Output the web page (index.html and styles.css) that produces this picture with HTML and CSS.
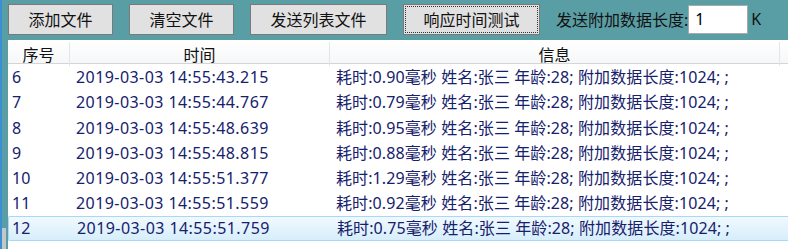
FILE: index.html
```html
<!DOCTYPE html>
<html lang="zh-CN">
<head>
    <meta charset="UTF-8">
    <title>响应时间测试</title>
    <link rel="stylesheet" href="styles.css">
</head>
<body>

<div class="toolbar">
    <button class="btn btn-sm">添加文件</button>
    <button class="btn btn-sm">清空文件</button>
    <button class="btn btn-lg">发送列表文件</button>
    <button class="btn btn-lg focused">响应时间测试</button>
    <label class="size-label">发送附加数据长度:</label>
    <input class="size-input" type="text" value="1">
    <span class="unit">K</span>
</div>

<div class="list">
    <div class="list-head">
        <div class="col">序号</div>
        <div class="col">时间</div>
        <div class="col">信息</div>
        <div class="col col-rest"></div>
    </div>
    <div class="list-body" id="rows">
        <!-- rows filled below -->
    </div>
</div>

<script>
    const rows = [
        ['6', '2019-03-03 14:55:43.215', '0.90'],
        ['7', '2019-03-03 14:55:44.767', '0.79'],
        ['8', '2019-03-03 14:55:48.639', '0.95'],
        ['9', '2019-03-03 14:55:48.815', '0.88'],
        ['10', '2019-03-03 14:55:51.377', '1.29'],
        ['11', '2019-03-03 14:55:51.559', '0.92'],
        ['12', '2019-03-03 14:55:51.759', '0.75']
    ];

    const body = document.getElementById('rows');
    rows.forEach((r, i) => {
        const cls = i === rows.length - 1 ? 'row selected' : 'row';
        body.innerHTML += `
            <div class="${cls}">
                <div class="cell">${r[0]}</div>
                <div class="cell cell-time">${r[1]}</div>
                <div class="cell cell-info">耗时:${r[2]}毫秒 姓名:张三 年龄:28; 附加数据长度:1024; ;</div>
            </div>`;
    });
</script>

</body>
</html>
```

FILE: styles.css
```css
body {
    margin: 0;
    width: 788px;
    height: 249px;
    overflow: hidden;
    box-sizing: border-box;
    border-left: 2px solid #3a8fd4;
    background: linear-gradient(#c4c7c9, #c4c7c9) 0 228px / 6px 21px no-repeat, #5a9ea5;
    font-family: "Noto Sans", "Noto Sans CJK SC", sans-serif;
    font-size: 16px;
    padding-left: 6px;
}
.toolbar {
    display: flex;
    align-items: center;
    height: 40px;
    padding-bottom: 2px;
    box-sizing: border-box;
}
.btn {
    height: 31px;
    margin-right: 16px;
    background: #e1e1e1;
    border: 1px solid #7a7a7a;
    font-family: inherit;
    font-size: 16px;
    color: #111;
    padding: 0;
}
.btn-sm {
    width: 105px;
}
.btn-lg {
    width: 137px;
}
.focused {
    outline: 1px dotted #333;
    outline-offset: -3px;
}
.size-label {
    color: #111;
}
.size-input {
    width: 60px;
    height: 29px;
    box-sizing: border-box;
    border: 1px solid #a9a9a9;
    font-family: inherit;
    font-size: 16px;
    padding: 0 0 0 6px;
    margin-left: 0;
    outline: none;
}
.unit {
    margin-left: 3px;
    color: #111;
}
.list {
    background: #fff;
    height: 209px;
}
.list-head {
    display: grid;
    grid-template-columns: 62px 260px 450px 1fr;
    height: 24px;
    border-top: 1px solid #ffffff;
    border-bottom: 1px solid #d5d5d5;
    background: linear-gradient(#ffffff, #f6f7f8);
    box-sizing: border-box;
}
.col {
    text-align: center;
    line-height: 22px;
    padding-top: 2px;
    color: #111;
    border-right: 1px solid #e3e5e8;
    margin: 1px 0;
    box-sizing: border-box;
}
.col-rest {
    border-right: none;
}
.row {
    display: grid;
    grid-template-columns: 62px 260px 1fr;
    height: 25.25px;
    line-height: 25px;
    padding-top: 1px;
    color: #16216c;
    box-sizing: border-box;
    white-space: nowrap;
}
.cell {
    padding-left: 6px;
}
.cell:first-child {
    padding-left: 4px;
}
.cell-time {
    letter-spacing: 0.43px;
}
.cell-info {
    letter-spacing: 0.1px;
}
.selected {
    background: linear-gradient(#f1f9fe, #d6eefb);
    border: 1px solid #a6d9f5;
    border-right: none;
    border-radius: 2px 0 0 2px;
    line-height: 23px;
    padding-top: 0;
}
.selected .cell:first-child {
    padding-left: 3px;
}
```
